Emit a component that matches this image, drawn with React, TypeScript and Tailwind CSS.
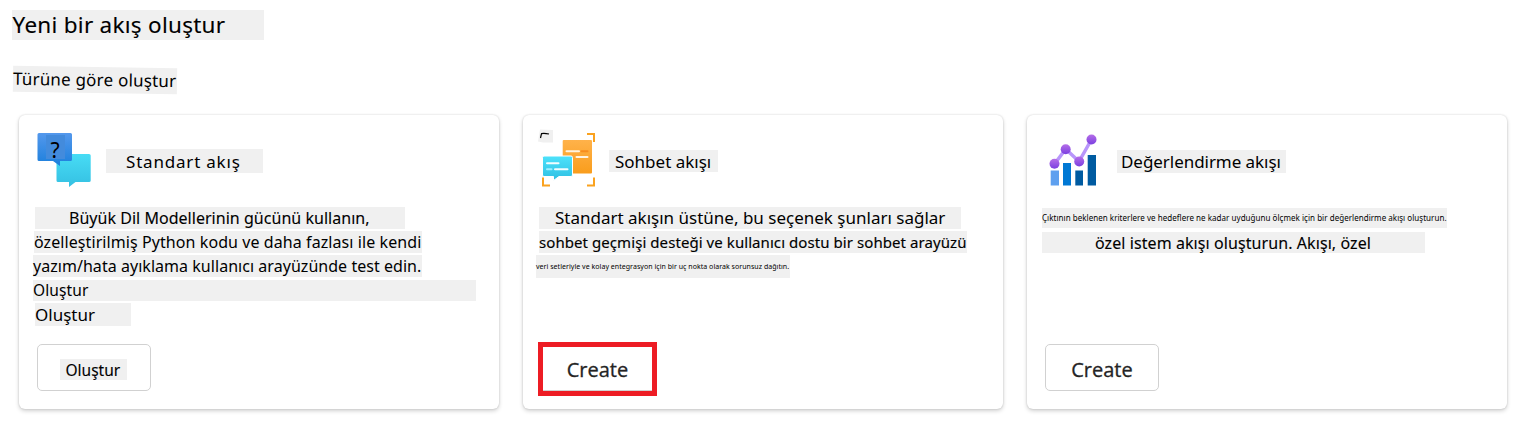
import type { ReactNode } from 'react';

function Strip({ className, children }: { className: string; children?: ReactNode }) {
  return <div className={`shrink-0 whitespace-pre bg-[#f0f0f0] text-black ${className}`}>{children}</div>;
}

function Card({ icon, title, body, action }: { icon: ReactNode; title: ReactNode; body: ReactNode; action: ReactNode }) {
  return (
    <section className="flex h-[294px] w-[480px] shrink-0 flex-col rounded-[6px] bg-white shadow-[0_0_2px_rgba(0,0,0,0.16),0_2px_4px_rgba(0,0,0,0.18)]">
      <div className="flex h-[92px] items-start">
        {icon}
        {title}
      </div>
      <div className="flex h-[135px] flex-col items-start">{body}</div>
      {action}
    </section>
  );
}

function StandardIcon() {
  return (
    <svg width="87" height="92" viewBox="0 0 87 92" className="shrink-0">
      <defs>
        <linearGradient id="sb" x1="0" y1="0" x2="0" y2="1">
          <stop offset="0" stopColor="#5498ec" />
          <stop offset="1" stopColor="#1b7fdc" />
        </linearGradient>
        <linearGradient id="sc" x1="0" y1="0" x2="0" y2="1">
          <stop offset="0" stopColor="#47dcf5" />
          <stop offset="1" stopColor="#35c0e2" />
        </linearGradient>
      </defs>
      <path d="M39 39H70Q71.700 39 71.700 40.500V65.500Q71.700 67 70 67H56.500L50 72V67H39Q37.500 67 37.500 65.500V40.500Q37.500 39 39 39Z" fill="url(#sc)" />
      <path d="M20 18H51.500Q53 18 53 19.500V44.500Q53 46 51.500 46H41V51L34 46H20Q18.500 46 18.500 44.500V19.500Q18.500 18 20 18Z" fill="url(#sb)" />
      <rect x="27" y="20" width="19" height="24" fill="#438bdc" />
      <text x="31.500" y="42.500" fontSize="21" fill="#000" fontFamily="Noto Sans, sans-serif">?</text>
    </svg>
  );
}

function ChatIcon() {
  return (
    <svg width="86" height="92" viewBox="0 0 86 92" className="shrink-0">
      <defs>
        <linearGradient id="co" x1="0" y1="0" x2="0" y2="1">
          <stop offset="0" stopColor="#ffb24a" />
          <stop offset="1" stopColor="#f99d1c" />
        </linearGradient>
        <linearGradient id="cc" x1="0" y1="0" x2="0" y2="1">
          <stop offset="0" stopColor="#4de2fb" />
          <stop offset="1" stopColor="#2fbfe2" />
        </linearGradient>
      </defs>
      <path d="M17 14.500L30 15V27.500H20L15 26.500Z" fill="#f0f0f0" />
      <path d="M17.500 23L18.500 18.600Q21 17.800 26 19" fill="none" stroke="#000" strokeWidth="1.200" />
      <path d="M64 19H71V27M20 62.500V70.500H27M64 70.500H71V62.500" fill="none" stroke="#faa21f" strokeWidth="2" />
      <rect x="39.700" y="25" width="29.300" height="33.500" rx="1" fill="url(#co)" />
      <path d="M43.500 36.200H56" stroke="#fff3df" strokeWidth="2" strokeLinecap="round" />
      <path d="M58.500 36.200H64.500" stroke="#f78d1e" strokeWidth="2" strokeLinecap="round" />
      <path d="M53.500 42H64.500" stroke="#fff3df" strokeWidth="2" strokeLinecap="round" />
      <path d="M21 41H48Q49.500 41 49.500 42.500V60Q49.500 61.500 48 61.500H36L30.500 65.500V61.500H21Q19.500 61.500 19.500 60V42.500Q19.500 41 21 41Z" fill="url(#cc)" stroke="#fff" strokeWidth="1" />
      <path d="M24 48.300H35.500M32 54.200H44.500" stroke="#f2fdff" strokeWidth="2" strokeLinecap="round" />
      <path d="M24 54.200H28.500" stroke="#9cefff" strokeWidth="2" strokeLinecap="round" />
    </svg>
  );
}

function EvaluationIcon() {
  return (
    <svg width="90" height="92" viewBox="0 0 90 92" className="shrink-0">
      <defs>
        <linearGradient id="ep" x1="0" y1="0" x2="0" y2="1">
          <stop offset="0" stopColor="#b56ee8" />
          <stop offset="1" stopColor="#7b3fe0" />
        </linearGradient>
      </defs>
      <rect x="23.700" y="55.500" width="8.300" height="15" fill="#5ea0ef" />
      <rect x="36" y="48" width="8" height="22.500" fill="#0078d4" />
      <rect x="48.300" y="55.500" width="7.700" height="15" fill="#005ba1" />
      <rect x="60.700" y="40" width="8.300" height="30.500" fill="#005ba1" />
      <path d="M27.500 49L38.700 34L52 46.500L64.500 24.500" fill="none" stroke="#b896fb" strokeWidth="3.500" />
      <circle cx="27.500" cy="48.800" r="5" fill="url(#ep)" />
      <circle cx="38.700" cy="34.200" r="5" fill="url(#ep)" />
      <circle cx="52.200" cy="46.500" r="5" fill="url(#ep)" />
      <circle cx="64.500" cy="24.500" r="5" fill="url(#ep)" />
    </svg>
  );
}

export default function App() {
  return (
    <main className="flex h-[421px] w-[1519px] flex-col items-start overflow-hidden bg-white font-['Noto_Sans',sans-serif]">
      <Strip className="mt-[10px] ml-[12px] h-[30px] w-[252px] pl-[0.5px] text-[22.5px] leading-[30px] tracking-[0.27px] [-webkit-text-stroke:0.1px_#000]">Yeni bir akış oluştur</Strip>
      <Strip className="mt-[27px] ml-[13px] h-[26px] w-[164px] rotate-[0.8deg] text-[17px] leading-[25px] tracking-[0.2px] text-[#1a1a1a]">Türüne göre oluştur</Strip>
      <div className="mt-[22px] ml-[19px] flex gap-6">
        <Card
          icon={<StandardIcon />}
          title={<Strip className="mt-[34px] h-[24px] w-[157px] pl-[20px] text-[17px] leading-[25px] tracking-[0.8px]">Standart akış</Strip>}
          body={
            <>
              <Strip className="ml-[16px] h-[22px] w-[370px] pl-[34px] text-[16px] leading-[22px] tracking-[0.03px] [-webkit-text-stroke:0.1px_#000]">Büyük Dil Modellerinin gücünü kullanın,</Strip>
              <Strip className="mt-[2px] ml-[15px] h-[22px] w-[388px] text-[16px] leading-[22px] tracking-[0.08px]">özelleştirilmiş Python kodu ve daha fazlası ile kendi</Strip>
              <Strip className="mt-[2px] ml-[14px] h-[22px] w-[389px] text-[16px] leading-[22px] tracking-[0.04px]">yazım/hata ayıklama kullanıcı arayüzünde test edin.</Strip>
              <Strip className="mt-[3px] ml-[14px] h-[21px] w-[443px] text-[15.5px] leading-[20px] tracking-[0.1px]">Oluştur</Strip>
              <Strip className="mt-[2px] ml-[16px] h-[23px] w-[96px] text-[17px] leading-[23px]">Oluştur</Strip>
            </>
          }
          action={
            <button className="mt-[2px] ml-[18px] flex h-[47px] w-[114px] items-start rounded-[5px] border border-[#d1d1d1] bg-white pt-[14px] pl-[22px] text-left">
              <Strip className="h-[21px] w-[67px] pl-[5.5px] text-[15.5px] leading-[22px] [-webkit-text-stroke:0.1px_#000]">Oluştur</Strip>
            </button>
          }
        />
        <Card
          icon={<ChatIcon />}
          title={<Strip className="mt-[35px] h-[22px] w-[109px] pl-[6px] text-[17px] leading-[23px]">Sohbet akışı</Strip>}
          body={
            <>
              <Strip className="ml-[16px] h-[22px] w-[422px] pl-[16px] text-[17px] leading-[22px]">Standart akışın üstüne, bu seçenek şunları sağlar</Strip>
              <Strip className="mt-[2px] ml-[16px] h-[22px] w-[428px] text-[15px] leading-[22px] tracking-[0.07px] [-webkit-text-stroke:0.15px_#000]">sohbet geçmişi desteği ve kullanıcı dostu bir sohbet arayüzü</Strip>
              <Strip className="mt-[2px] ml-[13px] h-[23px] w-[254px] text-[7px] leading-[23px] tracking-[0.04px]">veri setleriyle ve kolay entegrasyon için bir uç nokta olarak sorunsuz dağıtın.</Strip>
            </>
          }
          action={
            <button className="ml-[15px] flex h-[54px] w-[119px] items-center justify-center border-[5px] border-[#ed1c24] bg-white pt-[2px] font-['Open_Sans',sans-serif] text-[20px] text-[#242424] shadow-[inset_0_-1px_0_#d1d1d1] [-webkit-text-stroke:0.3px_#242424]">
              Create
            </button>
          }
        />
        <Card
          icon={<EvaluationIcon />}
          title={<Strip className="mt-[35px] h-[23px] w-[169px] pl-[4px] text-[17px] leading-[23px] tracking-[-0.05px]">Değerlendirme akışı</Strip>}
          body={
            <>
              <Strip className="mt-px ml-[15px] h-[20px] w-[405px] text-[8px] leading-[20px] tracking-[0.04px]">Çıktının beklenen kriterlere ve hedeflere ne kadar uyduğunu ölçmek için bir değerlendirme akışı oluşturun.</Strip>
              <Strip className="mt-[4px] ml-[15px] h-[21px] w-[383px] pl-[53px] text-[16px] leading-[22px] tracking-[0.08px] [-webkit-text-stroke:0.1px_#000]">özel istem akışı oluşturun. Akışı, özel</Strip>
            </>
          }
          action={
            <button className="mt-[2px] ml-[18px] flex h-[47px] w-[114px] items-center justify-center rounded-[5px] border border-[#d1d1d1] bg-white pt-[4px] font-['Open_Sans',sans-serif] text-[20px] text-[#242424] [-webkit-text-stroke:0.3px_#242424]">
              Create
            </button>
          }
        />
      </div>
    </main>
  );
}
